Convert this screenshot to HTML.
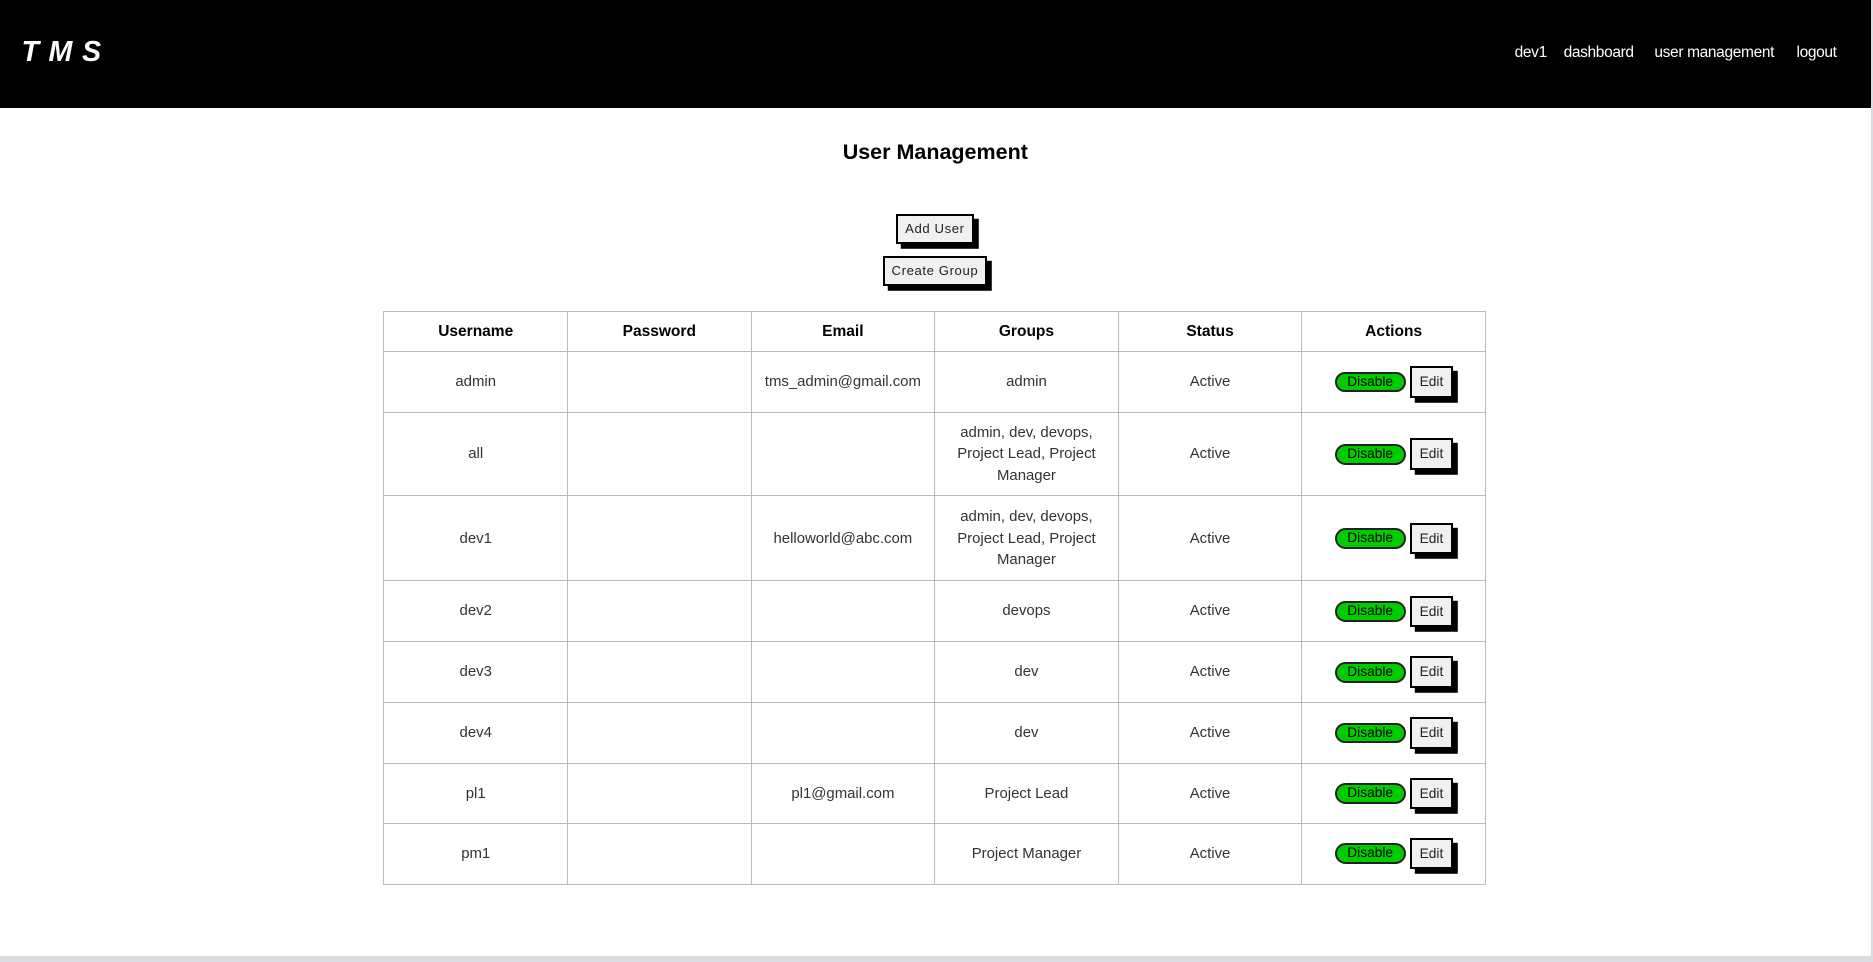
<!DOCTYPE html>
<html><head><style>
html{zoom:1.1945}
body{margin:0;width:1568px;height:805px;background:#fff;font-family:"Liberation Sans",sans-serif;position:relative;overflow:hidden;color:#222}
.hdr{position:absolute;left:0;top:0;width:1566px;height:90px;background:#000}
.logo{position:absolute;left:18px;top:30px;color:#fff;font-weight:bold;font-style:italic;font-size:24px;letter-spacing:8px}
.nav{position:absolute;top:37px;color:#fff;font-size:13px;letter-spacing:-0.3px}
.sb{position:absolute;right:0;top:0;width:2px;height:805px;background:#d8dce0}
.bot{position:absolute;left:0;top:800px;width:1568px;height:5px;background:#d8dce0}
h1{position:absolute;left:0;width:1566px;top:117px;margin:0;text-align:center;font-size:18px;color:#000}
.btn{position:absolute;background:#f0f0f0;border:2px solid #000;box-shadow:4px 4px 0 #000;font-size:11px;letter-spacing:.5px;text-align:center;color:#222}
table{position:absolute;left:321px;top:260px;border-collapse:collapse;width:923px;table-layout:fixed}
td,th{border:1px solid #bbb;text-align:center;font-size:12.5px;padding:0 10px;line-height:18px;color:#333;font-weight:normal}
th{font-weight:bold;color:#000;height:33px;font-size:13px}
.dis{display:inline-block;background:#0c0;border:2px solid #222;border-radius:9px;width:56px;height:14px;line-height:14px;font-size:11.5px;color:#000;vertical-align:middle}
.ed{display:inline-block;background:#f0f0f0;border:2px solid #000;box-shadow:4px 4px 0 #000;width:32px;height:23px;line-height:23px;font-size:11.5px;margin-left:4px;vertical-align:middle;color:#222}
</style></head><body>
<div class="hdr">
<div class="logo">TMS</div>
<div class="nav" style="left:1268px">dev1</div>
<div class="nav" style="left:1309px">dashboard</div>
<div class="nav" style="left:1385px">user management</div>
<div class="nav" style="left:1504px">logout</div>
</div>
<div class="sb"></div><div class="bot"></div>
<h1>User Management</h1>
<div class="btn" style="left:750px;top:179px;width:62px;height:22px;line-height:22px">Add User</div>
<div class="btn" style="left:739px;top:214px;width:84px;height:22px;line-height:22px">Create Group</div>
<table>
<colgroup><col><col><col><col><col><col></colgroup>
<tr><th>Username</th><th>Password</th><th>Email</th><th>Groups</th><th>Status</th><th>Actions</th></tr>
<tr style="height:51px"><td>admin</td><td></td><td>tms_admin@gmail.com</td><td>admin</td><td>Active</td><td><span class="dis">Disable</span><span class="ed">Edit</span></td></tr>
<tr style="height:70px"><td>all</td><td></td><td></td><td>admin, dev, devops, Project Lead, Project Manager</td><td>Active</td><td><span class="dis">Disable</span><span class="ed">Edit</span></td></tr>
<tr style="height:71px"><td>dev1</td><td></td><td>helloworld@abc.com</td><td>admin, dev, devops, Project Lead, Project Manager</td><td>Active</td><td><span class="dis">Disable</span><span class="ed">Edit</span></td></tr>
<tr style="height:51px"><td>dev2</td><td></td><td></td><td>devops</td><td>Active</td><td><span class="dis">Disable</span><span class="ed">Edit</span></td></tr>
<tr style="height:51px"><td>dev3</td><td></td><td></td><td>dev</td><td>Active</td><td><span class="dis">Disable</span><span class="ed">Edit</span></td></tr>
<tr style="height:51px"><td>dev4</td><td></td><td></td><td>dev</td><td>Active</td><td><span class="dis">Disable</span><span class="ed">Edit</span></td></tr>
<tr style="height:50px"><td>pl1</td><td></td><td>pl1@gmail.com</td><td>Project Lead</td><td>Active</td><td><span class="dis">Disable</span><span class="ed">Edit</span></td></tr>
<tr style="height:51px"><td>pm1</td><td></td><td></td><td>Project Manager</td><td>Active</td><td><span class="dis">Disable</span><span class="ed">Edit</span></td></tr>
</table>
</body></html>
